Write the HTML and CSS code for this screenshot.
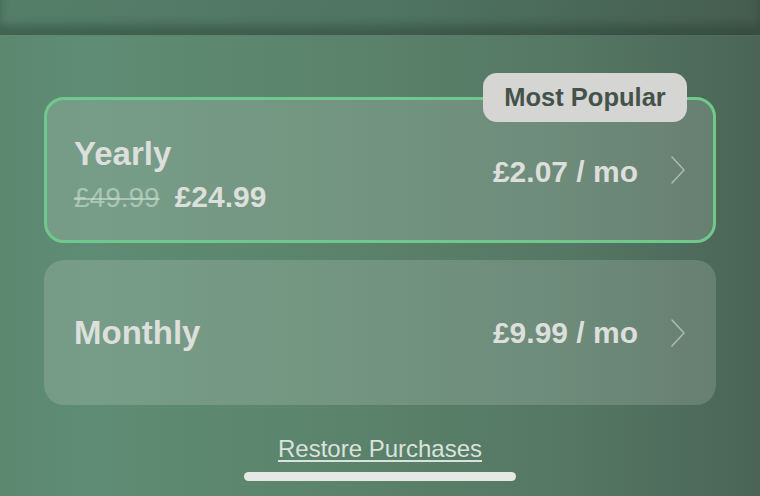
FILE: index.html
```html
<!DOCTYPE html>
<html lang="en">
<head>
<meta charset="utf-8">
<title>Plans</title>
<link rel="stylesheet" href="styles.css">
</head>
<body>
<div class="screen">
  <div class="topband"></div>
  <main class="plans">
    <div class="plan plan-selected">
      <span class="badge">Most Popular</span>
      <div class="plan-info plan-info-offset">
        <div class="plan-name">Yearly</div>
        <div class="plan-prices">
          <span class="old-price">£49.99</span>
          <span class="new-price">£24.99</span>
        </div>
      </div>
      <div class="plan-rate plan-rate-offset">£2.07 / mo</div>
      <svg class="chevron" width="16" height="30" viewBox="0 0 16 30"><path d="M2 2 L14 15 L2 28" fill="none" stroke="currentColor" stroke-width="1.6" stroke-linecap="round" stroke-linejoin="round"/></svg>
    </div>
    <div class="plan">
      <div class="plan-info">
        <div class="plan-name">Monthly</div>
      </div>
      <div class="plan-rate">£9.99 / mo</div>
      <svg class="chevron" width="16" height="30" viewBox="0 0 16 30"><path d="M2 2 L14 15 L2 28" fill="none" stroke="currentColor" stroke-width="1.6" stroke-linecap="round" stroke-linejoin="round"/></svg>
    </div>
    <a class="restore" href="#">Restore Purchases</a>
    <div class="home-indicator"></div>
  </main>
</div>
</body>
</html>
```

FILE: styles.css
```css
* { box-sizing: border-box; }
html, body {
  margin: 0;
  padding: 0;
}
body {
  width: 760px;
  height: 496px;
  overflow: hidden;
  font-family: "Liberation Sans", Arial, sans-serif;
}
.screen {
  width: 760px;
  height: 496px;
  display: flex;
  flex-direction: column;
  background: linear-gradient(to right, #5c8870 0%, #5f8c74 12%, #5b836b 45%, #557763 75%, #4a6556 100%);
}
.topband {
  height: 36px;
  flex: none;
  background: linear-gradient(to right, #557f69 0%, #507563 50%, #455d50 100%);
  box-shadow: inset 0 -10px 10px rgba(30, 45, 38, 0.35);
  border-bottom: 1px solid rgba(255, 255, 255, 0.07);
}
.plans {
  display: flex;
  flex-direction: column;
  padding: 61px 44px 0;
}
.plan {
  position: relative;
  height: 145px;
  border-radius: 20px;
  background: rgba(255, 255, 255, 0.15);
  display: flex;
  align-items: center;
  padding: 0 30px;
  color: #dcdfdb;
}
.plan-selected {
  height: 146px;
  border: 3px solid #70c88c;
  padding: 0 27px;
  margin-bottom: 17px;
}
.badge {
  position: absolute;
  top: -27px;
  right: 26px;
  width: 204px;
  height: 49px;
  border-radius: 14px;
  background: #d5d6d4;
  color: #44524a;
  font-size: 25.5px;
  font-weight: 700;
  display: flex;
  align-items: center;
  justify-content: center;
}
.plan-info {
  flex: 1;
  display: flex;
  flex-direction: column;
  gap: 8px;
}
.plan-info-offset {
  margin-top: 10px;
}
.plan-name {
  font-size: 33px;
  line-height: 36px;
  font-weight: 700;
}
.plan-prices {
  display: flex;
  align-items: baseline;
  gap: 15px;
  line-height: 34px;
}
.old-price {
  font-size: 28px;
  color: rgba(205, 225, 210, 0.6);
  text-decoration: line-through;
  text-decoration-thickness: 1.5px;
}
.new-price {
  font-size: 30px;
  font-weight: 700;
}
.plan-rate {
  font-size: 30px;
  line-height: 34px;
  font-weight: 700;
  margin-right: 32px;
}
.plan-rate-offset {
  margin-top: 4px;
}
.chevron {
  color: #a9bbb0;
  flex: none;
}
.restore {
  align-self: center;
  margin-top: 30px;
  font-size: 24px;
  line-height: 28px;
  color: #d9e2dc;
  text-decoration: underline;
  text-decoration-thickness: 1.5px;
  text-underline-offset: 3px;
}
.home-indicator {
  align-self: center;
  margin-top: 9px;
  width: 272px;
  height: 9px;
  border-radius: 5px;
  background: #e6e8e6;
}
```
